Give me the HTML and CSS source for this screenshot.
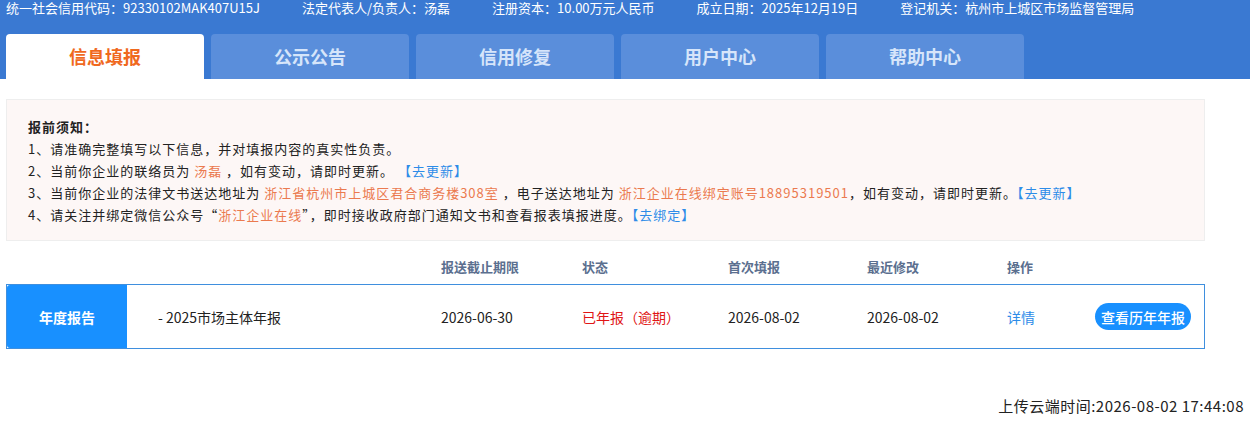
FILE: index.html
```html
<!DOCTYPE html>
<html lang="zh-CN">
<head>
  <meta charset="UTF-8">
  <meta name="viewport" content="width=device-width, initial-scale=1.0">
  <title>信息填报</title>
  <link rel="stylesheet" href="styles.css">
</head>
<body>
  <div class="header">
    <div class="info-bar">
      <span>统一社会信用代码：92330102MAK407U15J</span>
      <span>法定代表人/负责人：汤磊</span>
      <span>注册资本：10.00万元人民币</span>
      <span>成立日期：2025年12月19日</span>
      <span>登记机关：杭州市上城区市场监督管理局</span>
    </div>
    <div class="tabs">
      <div class="tab active">信息填报</div>
      <div class="tab">公示公告</div>
      <div class="tab">信用修复</div>
      <div class="tab">用户中心</div>
      <div class="tab">帮助中心</div>
    </div>
  </div>

  <div class="notice">
    <p class="notice-title">报前须知：</p>
    <p>1、请准确完整填写以下信息，并对填报内容的真实性负责。</p>
    <p>2、当前你企业的联络员为 <span class="hl">汤磊</span> ，如有变动，请即时更新。 <a class="link">【去更新】</a></p>
    <p>3、当前你企业的法律文书送达地址为 <span class="hl">浙江省杭州市上城区君合商务楼308室</span> ，电子送达地址为 <span class="hl">浙江企业在线绑定账号18895319501</span>，如有变动，请即时更新。<a class="link">【去更新】</a></p>
    <p>4、请关注并绑定微信公众号“<span class="hl">浙江企业在线</span>”，即时接收政府部门通知文书和查看报表填报进度。<a class="link">【去绑定】</a></p>
  </div>

  <div class="report">
    <div class="report-head">
      <span></span>
      <span></span>
      <span>报送截止期限</span>
      <span>状态</span>
      <span>首次填报</span>
      <span>最近修改</span>
      <span>操作</span>
      <span></span>
    </div>
    <div class="report-row">
      <div class="report-type">年度报告</div>
      <div class="report-name">- 2025市场主体年报</div>
      <div>2026-06-30</div>
      <div class="status">已年报（逾期）</div>
      <div>2026-08-02</div>
      <div>2026-08-02</div>
      <div><a class="link">详情</a></div>
      <div><button class="history-btn">查看历年年报</button></div>
    </div>
  </div>

  <div class="upload-time">上传云端时间:2026-08-02 17:44:08</div>
</body>
</html>
```

FILE: styles.css
```css
body {
  margin: 0;
  font-family: "Noto Sans CJK SC", "Noto Sans", sans-serif;
  font-size: 13px;
  color: #222;
  background: #fff;
}
.header {
  background: #3a79d2;
  padding: 0 6px;
}
.info-bar {
  display: flex;
  gap: 42px;
  height: 34px;
  line-height: 15px;
  color: #fff;
  font-size: 13px;
}
.tabs {
  display: flex;
  gap: 7px;
}
.tab {
  width: 198px;
  height: 45px;
  line-height: 45px;
  text-align: center;
  font-size: 18px;
  font-weight: bold;
  color: #d6e5fa;
  background: #5a8edb;
  border-radius: 4px 4px 0 0;
}
.tab.active {
  background: #fff;
  color: #f0691e;
}
.notice {
  margin: 20px 45px 0 6px;
  padding: 16px 21px 14px;
  background: #fdf7f6;
  border: 1px solid #eee;
  letter-spacing: 1px;
}
.notice p {
  margin: 0;
  line-height: 22px;
}
.notice-title {
  font-weight: bold;
}
.hl {
  color: #eb7a4f;
}
.link {
  color: #2d8ce8;
  cursor: pointer;
}
.report {
  margin: 6px 45px 0 6px;
}
.report-head,
.report-row {
  display: grid;
  grid-template-columns: 120px 314px 141px 146px 139px 140px 88px 1fr;
  align-items: center;
}
.report-head {
  height: 36px;
  font-weight: bold;
  color: #5b6f8f;
  border: 1px solid transparent;
  border-bottom: 0;
}
.report-row {
  height: 63px;
  border: 1px solid #3f8fde;
  font-size: 14px;
}
.report-type {
  height: 100%;
  background: #1890ff;
  color: #fff;
  font-weight: bold;
  font-size: 14px;
  display: flex;
  align-items: center;
  justify-content: center;
  border-radius: 3px 0 0 3px;
}
.report-name {
  padding-left: 31px;
}
.status {
  color: #e01515;
}
.history-btn {
  width: 96px;
  height: 27px;
  border: none;
  border-radius: 14px;
  background: #1890ff;
  color: #fff;
  font-family: inherit;
  font-size: 14px;
  font-weight: 500;
  padding: 0;
  cursor: pointer;
}
.upload-time {
  text-align: right;
  font-size: 15px;
  letter-spacing: 0.5px;
  margin-top: 46px;
  padding-right: 6px;
  color: #222;
}
```
